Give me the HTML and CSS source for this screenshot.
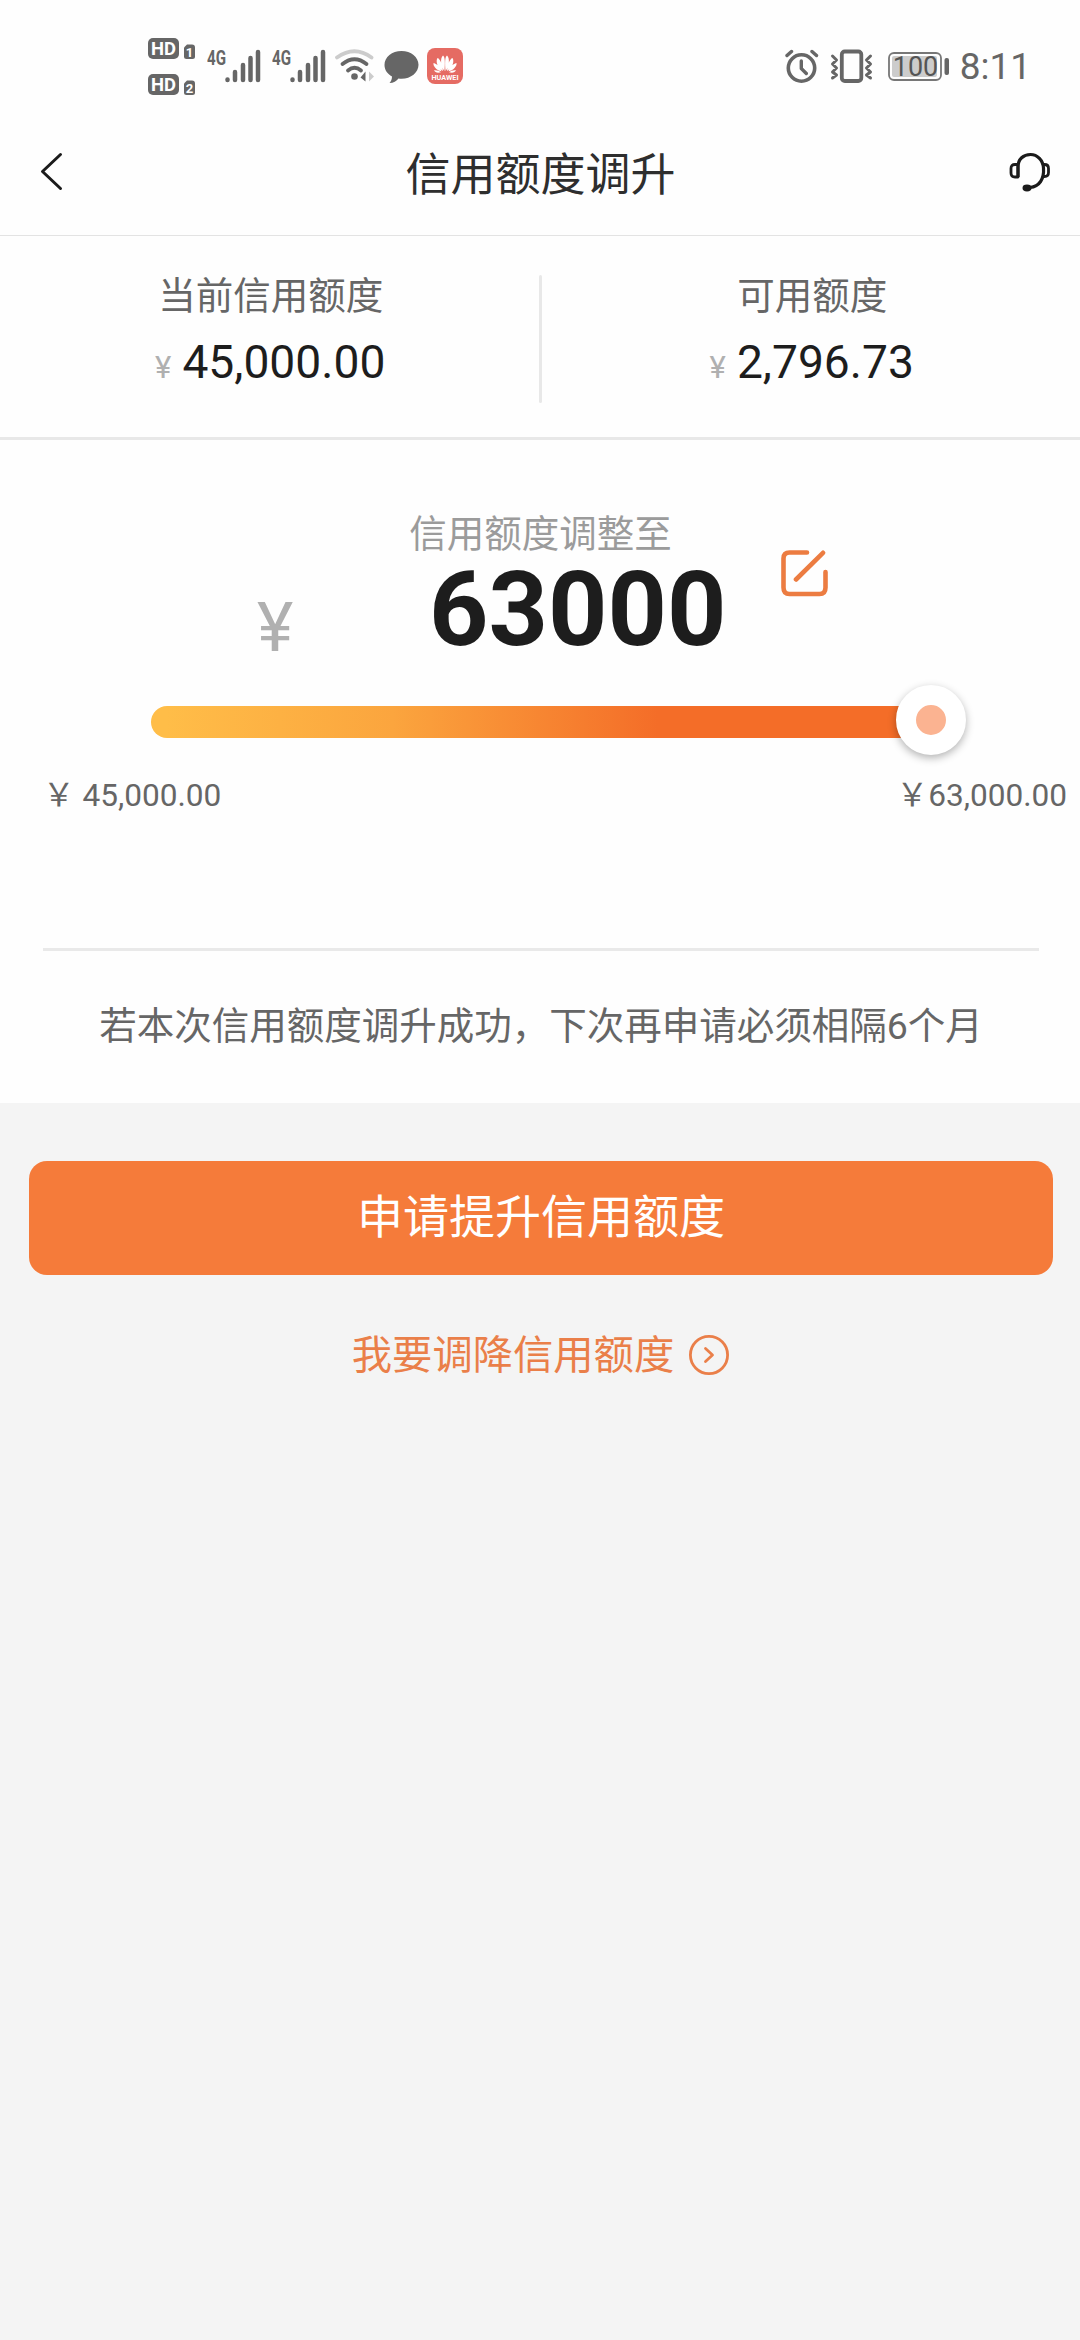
FILE: index.html
```html
<!DOCTYPE html>
<html lang="zh-CN">
<head>
<meta charset="utf-8">
<title>信用额度调升</title>
<link rel="stylesheet" href="styles.css">
</head>
<body>
<div class="status">
  <svg class="hd" width="49" height="60" viewBox="0 0 49 60">
    <g fill="#666">
      <rect x="0" y="2" width="31" height="21" rx="5"/>
      <path d="M39 8.500h5q3 0 3 3v9q0 2.500-2.500 2.500h-6q-2.500 0-2.500-2.500v-9z"/>
      <rect x="0" y="38" width="31" height="21" rx="5"/>
      <path d="M39 44.500h5q3 0 3 3v9q0 2.500-2.500 2.500h-6q-2.500 0-2.500-2.500v-9z"/>
    </g>
    <g class="hd-text" fill="#fff" text-anchor="middle">
      <text x="15.500" y="19" font-size="18" textLength="25" lengthAdjust="spacingAndGlyphs">HD</text>
      <text x="41.500" y="20.500" font-size="13">1</text>
      <text x="15.500" y="55" font-size="18" textLength="25" lengthAdjust="spacingAndGlyphs">HD</text>
      <text x="41.500" y="56.500" font-size="13">2</text>
    </g>
  </svg>
  <svg class="signal" width="54" height="36" viewBox="0 0 54 36">
    <text class="net" x="0" y="16.500" textLength="19" lengthAdjust="spacingAndGlyphs">4G</text>
    <path d="M20.500 31.500v.5M28 24v8M36 17v15M43.500 10v22M51 4v28" stroke="#666" stroke-width="4.500" stroke-linecap="round"/>
  </svg>
  <svg class="signal second" width="54" height="36" viewBox="0 0 54 36">
    <text class="net" x="0" y="16.500" textLength="19" lengthAdjust="spacingAndGlyphs">4G</text>
    <path d="M20.500 31.500v.5M28 24v8M36 17v15M43.500 10v22M51 4v28" stroke="#666" stroke-width="4.500" stroke-linecap="round"/>
  </svg>
  <svg class="wifi" width="40" height="36" viewBox="0 0 40 36" fill="none" stroke-width="3.800" stroke-linecap="round">
    <path d="M2 9.500Q19.500-3 36.500 9.500" stroke="#ccc"/>
    <path d="M7.500 16Q19.500 6.500 31.500 16M13 22.500Q19.500 17 26 22.500" stroke="#666"/>
    <circle cx="19.500" cy="28.500" r="3.300" fill="#666" stroke="none"/>
    <path d="M25.500 29.500l5-6v10z" fill="#666" stroke="none"/>
    <path d="M34 23.500v10l5-5z" fill="#ccc" stroke="none"/>
  </svg>
  <svg class="chat" width="35" height="36" viewBox="0 0 35 36">
    <path d="M17.500 3C8 3 .5 9 .5 17c0 5 3 9 7.500 11.500 0 3-1 5-2.500 6.500 4 0 7-2 9-4.500 1 .2 2 .3 3 .3 9.500 0 17-6.300 17-14S27 3 17.500 3z" fill="#666"/>
  </svg>
  <svg class="huawei" width="36" height="36" viewBox="0 0 36 36">
    <rect width="36" height="36" rx="8" fill="#e56b63"/>
    <g fill="#fff">
      <path d="M17.400 23C13.500 18 13 10 16 7.500c2 1 2.300 8 1.400 15.500zM16 23C10 19 8.500 13 10.500 10c3 1 5 7.500 5.500 13zM14.500 23.300C9 22 6 18 6.500 15c4 1 6.700 4.500 8 8.300zM14 24.200c-3.500 1-6 .2-7-2 2.700-.3 5.200.5 7 2z"/>
      <g transform="matrix(-1 0 0 1 36 0)">
        <path d="M17.400 23C13.500 18 13 10 16 7.500c2 1 2.300 8 1.400 15.500zM16 23C10 19 8.500 13 10.500 10c3 1 5 7.500 5.500 13zM14.500 23.300C9 22 6 18 6.500 15c4 1 6.700 4.500 8 8.300zM14 24.200c-3.500 1-6 .2-7-2 2.700-.3 5.200.5 7 2z"/>
      </g>
      <text class="hw" x="4.500" y="31.500" textLength="27" lengthAdjust="spacingAndGlyphs">HUAWEI</text>
    </g>
  </svg>
  <div class="status-right">
    <svg width="34" height="36" viewBox="0 0 34 36" fill="none" stroke="#666" stroke-linecap="round" stroke-linejoin="round">
      <circle cx="16.500" cy="20" r="13.200" stroke-width="3.600"/>
      <path d="M16.300 13v7.500l5 5M2 7.500l4.500-4M31.500 7.500l-4.500-4" stroke-width="3.400"/>
    </svg>
    <svg class="vibrate" width="43" height="36" viewBox="0 0 43 36" fill="none" stroke="#666" stroke-linejoin="round" stroke-linecap="round">
      <rect x="11.800" y="3.500" width="19.500" height="29.500" rx="3" stroke-width="3.800"/>
      <path d="M2.500 8l4 4-4 4 4 4-4 4 4 3-4 3M40.500 8l-4 4 4 4-4 4 4 4-4 3 4 3" stroke-width="3"/>
    </svg>
    <svg class="battery" width="61" height="36" viewBox="0 0 61 36">
      <rect x="1" y="5" width="52" height="27" rx="5" fill="none" stroke="#777" stroke-width="1.800"/>
      <rect x="4" y="8" width="45" height="21" rx="2" fill="#ccc"/>
      <rect x="56.500" y="10" width="4.500" height="17" rx="2" fill="#666"/>
      <text class="pct" x="27.500" y="28" text-anchor="middle">100</text>
    </svg>
    <span class="clock">8:11</span>
  </div>
</div>

<header class="header">
  <svg class="back" width="24" height="40" viewBox="0 0 24 40" fill="none" stroke="#1b1b1b" stroke-width="3" stroke-linecap="round" stroke-linejoin="round">
    <path d="M20.500 3.500L2.500 20.500l18 17"/>
  </svg>
  <h1 class="title">信用额度调升</h1>
  <svg class="service" width="42" height="40" viewBox="0 0 42 40" fill="none" stroke="#1b1b1b" stroke-width="3.200" stroke-linejoin="round">
    <path d="M9 25V15C9 7 14.500 2.500 21.500 2.500S34 8.500 34.500 16c.8 11-4 18.500-13.500 19.500"/>
    <path d="M9 12.500H6q-4 0-4 4v4.500q0 4 4 4h3z" stroke-width="2.800"/>
    <path d="M34.500 12.500h1q4 0 4 4v4q0 4-4 4h-2" stroke-width="2.800"/>
    <ellipse cx="18" cy="36" rx="4.500" ry="3.400" fill="#1b1b1b" stroke="none"/>
  </svg>
</header>

<section class="summary">
  <div class="cell">
    <div class="label">当前信用额度</div>
    <div class="value"><span class="yen">¥</span>45,000.00</div>
  </div>
  <div class="split"></div>
  <div class="cell">
    <div class="label">可用额度</div>
    <div class="value"><span class="yen">¥</span>2,796.73</div>
  </div>
</section>

<section class="adjust">
  <div class="adjust-label">信用额度调整至</div>
  <div class="amount-row">
    <span class="big-yen">¥</span>
    <span class="amount">63000</span>
    <svg class="edit" width="47" height="47" viewBox="0 0 47 47" fill="none" stroke="#ec7c41" stroke-width="4.600" stroke-linecap="round">
      <path d="M26 2.500H8.500q-6 0-6 6v29q0 6.500 6 6.500h30q6 0 6-6.500V22M42 2.800L15 29.500"/>
    </svg>
  </div>
  <div class="slider"><div class="knob"></div></div>
  <div class="range">
    <span>￥ 45,000.00</span>
    <span>￥63,000.00</span>
  </div>
  <p class="note">若本次信用额度调升成功，下次再申请必须相隔6个月</p>
</section>

<main class="actions">
  <button class="apply">申请提升信用额度</button>
  <a class="lower"><span>我要调降信用额度</span>
    <svg width="42" height="42" viewBox="0 0 42 42" fill="none" stroke="#ea7f49" stroke-width="2.800" stroke-linecap="round" stroke-linejoin="round">
      <circle cx="21" cy="21" r="18.600"/>
      <path d="M17.500 14.500l7 6.500-7 6.500"/>
    </svg>
  </a>
</main>
</body>
</html>
```
FILE: styles.css
```css
* {
  box-sizing: border-box;
}

body {
  margin: 0;
  width: 1080px;
  min-height: 2340px;
  background: #f4f4f4;
  font-family: Roboto, "Noto Sans CJK SC", sans-serif;
  color: #1d1d1d;
}

svg {
  display: block;
  flex: none;
}

.status {
  display: flex;
  align-items: center;
  height: 112px;
  padding: 20px 49px 0 148px;
  background: #fefefe;
}

.hd-text {
  font-weight: 700;
}

.signal {
  margin-left: 10px;
}

.second {
  margin-left: 11px;
}

.net {
  font-size: 20px;
  font-weight: 700;
  fill: #666;
}

.wifi {
  margin-left: 9px;
}

.chat {
  margin-left: 9px;
}

.huawei {
  margin-left: 8px;
}

.hw {
  font-size: 6.5px;
  font-weight: 700;
}

.status-right {
  display: flex;
  align-items: center;
  margin-left: auto;
}

.vibrate {
  margin-left: 11px;
}

.battery {
  margin-left: 15px;
}

.pct {
  font-size: 27px;
  fill: #555;
}

.clock {
  margin-left: 11px;
  padding-top: 2px;
  font-size: 37px;
  line-height: 40px;
  color: #666;
}

.header {
  display: flex;
  align-items: center;
  justify-content: space-between;
  height: 124px;
  padding: 0 29px 0 40px;
  border-bottom: 1px solid #e3e3e3;
  background: #fefefe;
}

.back {
  margin-bottom: 5px;
}

.service {
  margin-bottom: 3px;
}

.title {
  margin: 0 0 0 8px;
  padding-top: 4px;
  font-size: 45px;
  font-weight: 400;
  line-height: 60px;
  color: #2e2e2e;
}

.summary {
  display: flex;
  height: 204px;
  padding-top: 39px;
  border-bottom: 3px solid #e8e8e8;
  background: #fefefe;
}

.cell {
  flex: 1;
  padding-top: 1px;
  text-align: center;
}

.split {
  width: 3px;
  height: 128px;
  border-radius: 2px;
  background: #e8e8e8;
}

.label {
  padding-left: 3px;
  font-size: 37.5px;
  line-height: 40px;
  color: #666;
}

.value {
  margin-top: 20px;
  padding-left: 2px;
  font-size: 46.2px;
  line-height: 52px;
}

.yen {
  margin-right: 11px;
  font-size: 31px;
  color: #b0b0b0;
}

.adjust {
  height: 663px;
  padding-top: 74px;
  background: #fefefe;
}

.adjust-label {
  padding-left: 1px;
  font-size: 37.5px;
  line-height: 40px;
  text-align: center;
  color: #9b9b9b;
}

.amount-row {
  display: flex;
  height: 106px;
  padding-left: 257px;
}

.big-yen {
  width: 172px;
  padding-top: 34px;
  font-size: 69px;
  line-height: 80px;
  color: #b0b0b0;
}

.amount {
  width: 352px;
  padding-top: 5px;
  font-size: 103.7px;
  font-weight: 700;
  line-height: 102px;
}

.edit {
  margin-top: -4px;
}

.slider {
  position: relative;
  width: 780px;
  height: 32px;
  margin: 46px 0 0 151px;
  border-radius: 16px;
  background: linear-gradient(90deg, #ffbd48 2%, #fba53e 31%, #f46d28 65%);
}

.knob {
  position: absolute;
  right: -35px;
  top: -21px;
  width: 70px;
  height: 70px;
  border: 20px solid #fff;
  border-radius: 50%;
  background: #fbb391;
  box-shadow: 0 3px 8px rgba(0, 0, 0, .3);
}

.range {
  display: flex;
  justify-content: space-between;
  height: 210px;
  padding: 38px 13px 0 43px;
  font-size: 31.6px;
  line-height: 40px;
  color: #666;
}

.note {
  margin: 0 41px 0 43px;
  padding-top: 54px;
  border-top: 3px solid #e9e9e9;
  font-size: 37.5px;
  line-height: 42px;
  text-align: center;
  white-space: nowrap;
  color: #666;
}

.actions {
  display: flex;
  flex-direction: column;
  align-items: center;
  padding: 58px 27px 0 29px;
}

.apply {
  width: 1024px;
  height: 114px;
  padding: 0 0 10px;
  border: 0;
  border-radius: 18px;
  background: #f57b3a;
  font-family: inherit;
  font-size: 46px;
  color: #fff;
}

.lower {
  display: flex;
  align-items: center;
  gap: 14px;
  margin-top: 57px;
  font-size: 40.3px;
  line-height: 42px;
  color: #ea7f49;
}

.lower span {
  padding-top: 3px;
}
```
